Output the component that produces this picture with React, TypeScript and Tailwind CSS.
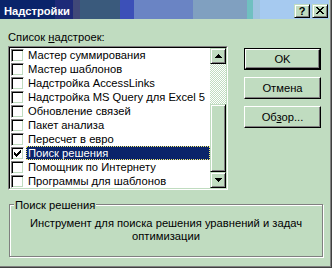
import React from "react";

const items = [
  "Мастер суммирования",
  "Мастер шаблонов",
  "Надстройка AccessLinks",
  "Надстройка MS Query для Excel 5",
  "Обновление связей",
  "Пакет анализа",
  "Пересчет в евро",
  "Поиск решения",
  "Помощник по Интернету",
  "Программы для шаблонов",
];

const selected = "Поиск решения";

const raisedSmall =
  "border border-t-[#c0dcc0] border-l-[#c0dcc0] border-r-black border-b-black bg-[#c0dcc0] shadow-[inset_1px_1px_0_#fff,inset_-1px_-1px_0_#808080]";

const pushButton =
  "flex h-[22px] w-[77px] items-center justify-center border border-t-white border-l-white border-r-black border-b-black bg-[#c0dcc0] shadow-[inset_-1px_-1px_0_#808080]";

function Arrow({ down }: { down?: boolean }) {
  return (
    <svg
      width="7"
      height="4"
      viewBox="0 0 7 4"
      shapeRendering="crispEdges"
      className={down ? "rotate-180" : ""}
    >
      <path d="M3 0h1v1h1v1h1v1h1v1H0V3h1V2h1V1h1z" fill="#000" />
    </svg>
  );
}

function CheckBox({ checked }: { checked: boolean }) {
  return (
    <span className="flex h-[13px] w-[13px] shrink-0 items-center justify-center border border-t-[#808080] border-l-[#808080] border-r-white border-b-white bg-white shadow-[inset_1px_1px_0_#000,inset_-1px_-1px_0_#c0dcc0]">
      {checked ? (
        <svg width="7" height="7" viewBox="0 0 7 7" shapeRendering="crispEdges">
          <path
            d="M6 0h1v1H6z M5 1h2v1H5z M0 2h1v1H0z M4 2h3v1H4z M0 3h2v1H0z M3 3h3v1H3z M0 4h5v1H0z M1 5h3v1H1z M2 6h1v1H2z"
            fill="#000"
          />
        </svg>
      ) : null}
    </span>
  );
}

export default function App() {
  return (
    <div className="h-[268px] w-[332px] overflow-hidden border-r border-b border-r-[#404040] border-b-[#404040] bg-[#c0dcc0] font-['Liberation_Sans',Arial,sans-serif] text-[11.2px] leading-[13px] text-black">
      <div className="flex h-full flex-col border-r border-b border-[#808080] pr-[1px]">
        {/* title bar */}
        <div className="flex h-[19px] shrink-0 items-start bg-[linear-gradient(to_right,#0a246a_0,#0a246a_55px,#1e2a78_55px,#1e2a78_73px,#404878_73px,#404878_80px,#3a5a7c_80px,#3a5a7c_120px,#3c50b8_120px,#3c50b8_134px,#6a84c4_134px,#6a84c4_193px,#80a0c0_193px,#80a0c0_247px,#70c0c0_247px,#70c0c0_253px,#a0c4e0_253px,#a0c4e0_260px,#a6caf0_260px)] pt-[4px] pr-[1px] pl-[4px]">
          <span className="mt-[1px] flex-1 font-bold text-white">Надстройки</span>
          <span className={`flex h-[14px] w-[16px] items-center justify-center text-[11px] font-bold ${raisedSmall}`}>
            ?
          </span>
          <span className={`ml-[2px] flex h-[14px] w-[16px] items-start pt-[2px] pl-[3px] ${raisedSmall}`}>
            <svg width="8" height="7" viewBox="0 0 8 7" shapeRendering="crispEdges">
              <path
                d="M0 0h2v1H0z M6 0h2v1H6z M1 1h2v1H1z M5 1h2v1H5z M2 2h4v1H2z M3 3h2v1H3z M2 4h4v1H2z M1 5h2v1H1z M5 5h2v1H5z M0 6h2v1H0z M6 6h2v1H6z"
                fill="#000"
              />
            </svg>
          </span>
        </div>

        <div className="px-[8px]">
          <div className="flex pt-[12px]">
            {/* list */}
            <div className="w-[220px]">
              <div>
                Список <u>н</u>адстроек:
              </div>
              <div className="mt-[2px] h-[144px] border border-t-[#808080] border-l-[#808080] border-r-white border-b-white">
                <div className="flex h-full border border-t-black border-l-black border-r-[#c0dcc0] border-b-[#c0dcc0]">
                  <div className="flex-1 bg-white">
                    {items.map((item) => {
                      const isSel = item === selected;
                      return (
                        <div key={item} className="flex h-[14px] items-center pl-[1px]">
                          <CheckBox checked={isSel} />
                          <span
                            className={
                              isSel
                                ? "ml-[2px] flex h-[14px] flex-1 items-center border border-dotted border-[#f8f070] bg-[#0a246a] pl-[1px] whitespace-nowrap text-white"
                                : "ml-[2px] flex h-[14px] flex-1 items-center border border-transparent pl-[1px] whitespace-nowrap"
                            }
                          >
                            {item}
                          </span>
                        </div>
                      );
                    })}
                  </div>
                  {/* scrollbar */}
                  <div className="flex w-[16px] flex-col">
                    <div className={`flex h-[16px] items-center justify-center ${raisedSmall}`}>
                      <Arrow />
                    </div>
                    <div className="h-[40px] bg-[image:repeating-conic-gradient(#c0dcc0_0_25%,#ffffff_0_50%)] bg-[length:2px_2px]" />
                    <div className={`flex-1 ${raisedSmall}`} />
                    <div className={`flex h-[16px] items-center justify-center ${raisedSmall}`}>
                      <Arrow down />
                    </div>
                  </div>
                </div>
              </div>
            </div>

            {/* buttons */}
            <div className="ml-[16px] flex flex-col gap-[7px] pt-[17px]">
              <div className="border border-black">
                <div className="flex h-[20px] w-[75px] items-center justify-center border border-t-white border-l-white border-r-black border-b-black shadow-[inset_-1px_-1px_0_#808080]">
                  OK
                </div>
              </div>
              <div className={pushButton}>Отмена</div>
              <div className={pushButton}>
                <span>
                  Об<u>з</u>ор...
                </span>
              </div>
            </div>
          </div>

          {/* description group */}
          <div className="relative mt-[14px] ml-[1px] h-[53px] w-[314px] border border-[#808080] shadow-[inset_1px_1px_0_#fff,1px_1px_0_#fff]">
            <span className="absolute top-[-6px] left-[4px] bg-[#c0dcc0] px-[1px]">
              Поиск решения
            </span>
            <p className="pt-[12px] text-center">
              Инструмент для поиска решения уравнений и задач
              <br />
              оптимизации
            </p>
          </div>
        </div>
      </div>
    </div>
  );
}
